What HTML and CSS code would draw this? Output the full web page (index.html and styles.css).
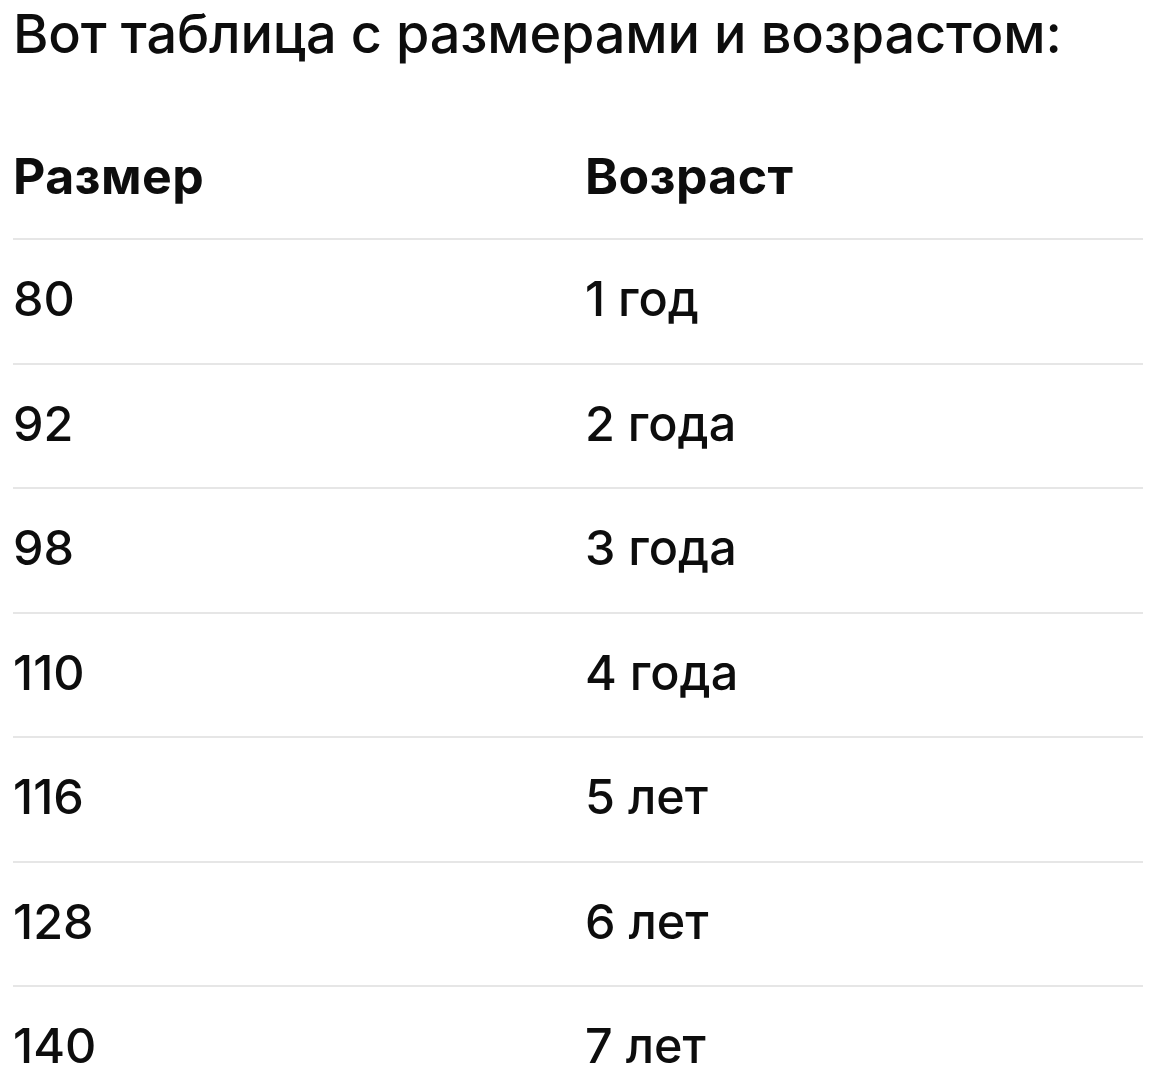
FILE: index.html
```html
<!DOCTYPE html>
<html lang="ru">
<head>
<meta charset="utf-8">
<link rel="stylesheet" href="styles.css">
</head>
<body>
<div class="page">
  <h1 class="title">Вот таблица с размерами и возрастом:</h1>
  <div class="table">
    <div class="row head"><div class="c1">Размер</div><div class="c2">Возраст</div></div>
    <div class="row"><div class="c1">80</div><div class="c2">1 год</div></div>
    <div class="row"><div class="c1">92</div><div class="c2">2 года</div></div>
    <div class="row"><div class="c1">98</div><div class="c2">3 года</div></div>
    <div class="row"><div class="c1">110</div><div class="c2">4 года</div></div>
    <div class="row"><div class="c1">116</div><div class="c2">5 лет</div></div>
    <div class="row"><div class="c1">128</div><div class="c2">6 лет</div></div>
    <div class="row"><div class="c1">140</div><div class="c2">7 лет</div></div>
  </div>
</div>
</body>
</html>
```
FILE: styles.css
```css
html, body { margin: 0; padding: 0; background: #fff; }
body { font-family: Inter, "Noto Sans", sans-serif; color: #0d0d0d; }
.page { padding: 0 10px 0 13px; }
.title { margin: 0; font-weight: 500; font-size: 54px; line-height: 64px; padding-top: 2px; letter-spacing: -0.15px; }
.table { margin-top: 66px; }
.row { display: grid; grid-template-columns: 572px 1fr; border-top: 2px solid #e6e6e6; height: 122.5px; box-sizing: content-box; align-items: center; font-size: 48.5px; font-weight: 500; }
.row > div { line-height: 58px; margin-bottom: 4px; }
.row.head { border-top: none; font-weight: 700; font-size: 50px; height: 91px; padding-top: 15px; align-items: start; letter-spacing: 0.4px; }
.row.head > div { margin-bottom: 0; }
```
